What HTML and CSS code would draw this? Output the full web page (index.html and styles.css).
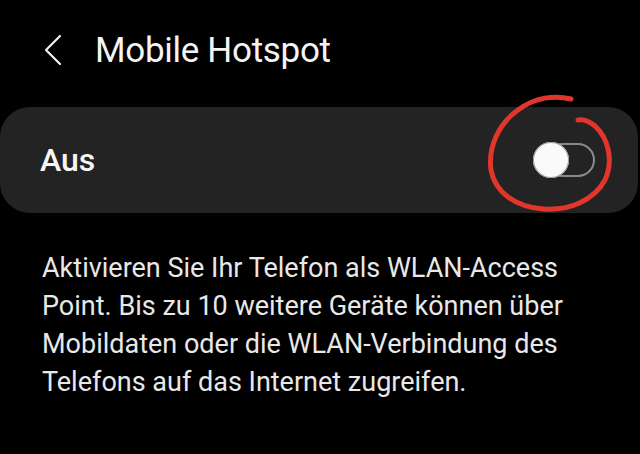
FILE: index.html
```html
<!DOCTYPE html>
<html lang="de">
<head>
<meta charset="utf-8">
<link rel="stylesheet" href="styles.css">
</head>
<body>
<div class="screen">
  <header class="appbar">
    <svg class="back" width="20" height="32" viewBox="0 0 20 32"><path d="M17 2 L3 16 L17 30" fill="none" stroke="#f2f2f2" stroke-width="2.2" stroke-linecap="round" stroke-linejoin="round"/></svg>
    <h1 class="title">Mobile Hotspot</h1>
  </header>
  <section class="card">
    <span class="card-label">Aus</span>
    <span class="switch"><span class="track"></span><span class="thumb"></span></span>
  </section>
  <p class="desc">Aktivieren Sie Ihr Telefon als WLAN-Access Point. Bis zu 10 weitere Geräte können über Mobildaten oder die WLAN-Verbindung des Telefons auf das Internet zugreifen.</p>
  <svg class="scribble" width="640" height="454" viewBox="0 0 640 454"><path d="M571 99 C555 95 535 97 518 110 C498 124 488 148 491 170 C495 192 515 207 543 209 C570 211 594 200 605 180 C614 160 608 138 595 126 C589 121 583 119 578 120" fill="none" stroke="#e2352c" stroke-width="5" stroke-linecap="round" stroke-linejoin="round"/></svg>
</div>
</body>
</html>
```
FILE: styles.css
```css
html, body {
  margin: 0;
  padding: 0;
  background: #000;
}
body {
  font-family: Roboto, "Noto Sans", "Liberation Sans", sans-serif;
  color: #f2f2f2;
}
.screen {
  position: relative;
  width: 640px;
  height: 454px;
  overflow: hidden;
  background: #000;
}
.appbar {
  display: flex;
  align-items: center;
  height: 100px;
  padding-left: 43px;
  box-sizing: border-box;
}
.back {
  flex: none;
}
.title {
  margin: 0 0 0 32px;
  font-size: 35px;
  font-weight: 400;
  color: #f4f4f4;
  letter-spacing: -0.3px;
}
.card {
  margin: 7px 2px 0 0;
  height: 106px;
  border-radius: 30px;
  background: #232323;
  display: flex;
  align-items: center;
  justify-content: space-between;
  padding: 0 43px 0 40px;
}
.card-label {
  font-size: 32px;
  font-weight: 500;
  color: #f6f6f6;
}
.switch {
  position: relative;
  width: 62px;
  height: 36px;
}
.track {
  position: absolute;
  left: 13px;
  top: 1px;
  width: 49px;
  height: 34px;
  box-sizing: border-box;
  border: 2px solid #8a8a8a;
  border-radius: 17px;
}
.thumb {
  position: absolute;
  left: 0;
  top: 0;
  width: 36px;
  height: 36px;
  border-radius: 50%;
  background: #fafafa;
  box-shadow: 0 0 0 1px #9a9a9a inset;
}
.desc {
  margin: 36px 0 0 0;
  padding: 0 56px 0 42px;
  font-size: 27px;
  line-height: 38px;
  color: #e8e8e8;
}
.scribble {
  position: absolute;
  left: 0;
  top: 0;
  pointer-events: none;
}
```
